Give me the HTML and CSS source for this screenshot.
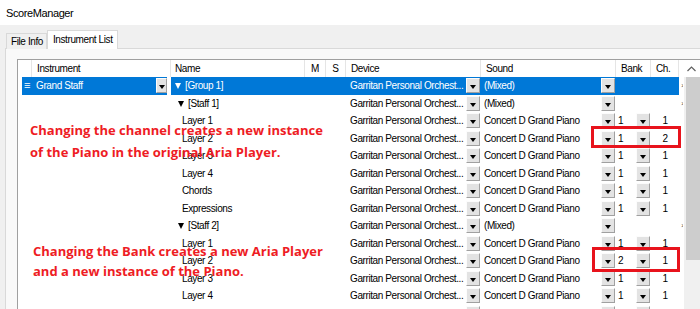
FILE: index.html
```html
<!DOCTYPE html>
<html lang="en">
<head>
    <meta charset="UTF-8">
    <title>ScoreManager</title>
    <link rel="stylesheet" href="styles.css">
</head>
<body>
    <div class="titlebar">ScoreManager</div>

    <div class="tabs">
        <div class="tab">File Info</div>
        <div class="tab active">Instrument List</div>
    </div>

    <div class="panel">
        <div class="grid">
            <div class="table">
                <div class="row head">
                    <div class="c"></div>
                    <div class="c">Instrument</div>
                    <div class="c">Name</div>
                    <div class="c mid">M</div>
                    <div class="c mid">S</div>
                    <div class="c">Device</div>
                    <div class="c">Sound</div>
                    <div class="c">Bank</div>
                    <div class="c">Ch.</div>
                    <div class="c"></div>
                </div>

                <div class="row sel">
                    <div class="c rh">&#8801;</div>
                    <div class="c inst"><span>Grand Staff</span><span class="dd small"></span></div>
                    <div class="c name l0"><i class="tri"></i>[Group 1]</div>
                    <div class="c"></div>
                    <div class="c"></div>
                    <div class="c dev"><span>Garritan Personal Orchest...</span><span class="dd"></span></div>
                    <div class="c snd"><span>(Mixed)</span><span class="dd"></span></div>
                    <div class="c"></div>
                    <div class="c"></div>
                    <div class="c x">&times;</div>
                </div>

                <div class="row">
                    <div class="c"></div><div class="c"></div>
                    <div class="c name l1"><i class="tri"></i>[Staff 1]</div>
                    <div class="c"></div><div class="c"></div>
                    <div class="c dev"><span>Garritan Personal Orchest...</span><span class="dd"></span></div>
                    <div class="c snd"><span>(Mixed)</span><span class="dd"></span></div>
                    <div class="c"></div><div class="c"></div>
                    <div class="c x">&times;</div>
                </div>

                <div class="row">
                    <div class="c"></div><div class="c"></div>
                    <div class="c name l2">Layer 1</div>
                    <div class="c"></div><div class="c"></div>
                    <div class="c dev"><span>Garritan Personal Orchest...</span><span class="dd"></span></div>
                    <div class="c snd"><span>Concert D Grand Piano</span><span class="dd"></span></div>
                    <div class="c bank"><span>1</span><span class="dd"></span></div>
                    <div class="c ch">1</div>
                    <div class="c"></div>
                </div>

                <div class="row">
                    <div class="c"></div><div class="c"></div>
                    <div class="c name l2">Layer 2</div>
                    <div class="c"></div><div class="c"></div>
                    <div class="c dev"><span>Garritan Personal Orchest...</span><span class="dd"></span></div>
                    <div class="c snd"><span>Concert D Grand Piano</span><span class="dd"></span></div>
                    <div class="c bank"><span>1</span><span class="dd"></span></div>
                    <div class="c ch">2</div>
                    <div class="c"></div>
                </div>

                <div class="row">
                    <div class="c"></div><div class="c"></div>
                    <div class="c name l2">Layer 3</div>
                    <div class="c"></div><div class="c"></div>
                    <div class="c dev"><span>Garritan Personal Orchest...</span><span class="dd"></span></div>
                    <div class="c snd"><span>Concert D Grand Piano</span><span class="dd"></span></div>
                    <div class="c bank"><span>1</span><span class="dd"></span></div>
                    <div class="c ch">1</div>
                    <div class="c"></div>
                </div>

                <div class="row">
                    <div class="c"></div><div class="c"></div>
                    <div class="c name l2">Layer 4</div>
                    <div class="c"></div><div class="c"></div>
                    <div class="c dev"><span>Garritan Personal Orchest...</span><span class="dd"></span></div>
                    <div class="c snd"><span>Concert D Grand Piano</span><span class="dd"></span></div>
                    <div class="c bank"><span>1</span><span class="dd"></span></div>
                    <div class="c ch">1</div>
                    <div class="c"></div>
                </div>

                <div class="row">
                    <div class="c"></div><div class="c"></div>
                    <div class="c name l2">Chords</div>
                    <div class="c"></div><div class="c"></div>
                    <div class="c dev"><span>Garritan Personal Orchest...</span><span class="dd"></span></div>
                    <div class="c snd"><span>Concert D Grand Piano</span><span class="dd"></span></div>
                    <div class="c bank"><span>1</span><span class="dd"></span></div>
                    <div class="c ch">1</div>
                    <div class="c"></div>
                </div>

                <div class="row">
                    <div class="c"></div><div class="c"></div>
                    <div class="c name l2">Expressions</div>
                    <div class="c"></div><div class="c"></div>
                    <div class="c dev"><span>Garritan Personal Orchest...</span><span class="dd"></span></div>
                    <div class="c snd"><span>Concert D Grand Piano</span><span class="dd"></span></div>
                    <div class="c bank"><span>1</span><span class="dd"></span></div>
                    <div class="c ch">1</div>
                    <div class="c"></div>
                </div>

                <div class="row">
                    <div class="c"></div><div class="c"></div>
                    <div class="c name l1"><i class="tri"></i>[Staff 2]</div>
                    <div class="c"></div><div class="c"></div>
                    <div class="c dev"><span>Garritan Personal Orchest...</span><span class="dd"></span></div>
                    <div class="c snd"><span>(Mixed)</span><span class="dd"></span></div>
                    <div class="c"></div><div class="c"></div>
                    <div class="c x">&times;</div>
                </div>

                <div class="row">
                    <div class="c"></div><div class="c"></div>
                    <div class="c name l2">Layer 1</div>
                    <div class="c"></div><div class="c"></div>
                    <div class="c dev"><span>Garritan Personal Orchest...</span><span class="dd"></span></div>
                    <div class="c snd"><span>Concert D Grand Piano</span><span class="dd"></span></div>
                    <div class="c bank"><span>1</span><span class="dd"></span></div>
                    <div class="c ch">1</div>
                    <div class="c"></div>
                </div>

                <div class="row">
                    <div class="c"></div><div class="c"></div>
                    <div class="c name l2">Layer 2</div>
                    <div class="c"></div><div class="c"></div>
                    <div class="c dev"><span>Garritan Personal Orchest...</span><span class="dd"></span></div>
                    <div class="c snd"><span>Concert D Grand Piano</span><span class="dd"></span></div>
                    <div class="c bank"><span>2</span><span class="dd"></span></div>
                    <div class="c ch">1</div>
                    <div class="c"></div>
                </div>

                <div class="row">
                    <div class="c"></div><div class="c"></div>
                    <div class="c name l2">Layer 3</div>
                    <div class="c"></div><div class="c"></div>
                    <div class="c dev"><span>Garritan Personal Orchest...</span><span class="dd"></span></div>
                    <div class="c snd"><span>Concert D Grand Piano</span><span class="dd"></span></div>
                    <div class="c bank"><span>1</span><span class="dd"></span></div>
                    <div class="c ch">1</div>
                    <div class="c"></div>
                </div>

                <div class="row">
                    <div class="c"></div><div class="c"></div>
                    <div class="c name l2">Layer 4</div>
                    <div class="c"></div><div class="c"></div>
                    <div class="c dev"><span>Garritan Personal Orchest...</span><span class="dd"></span></div>
                    <div class="c snd"><span>Concert D Grand Piano</span><span class="dd"></span></div>
                    <div class="c bank"><span>1</span><span class="dd"></span></div>
                    <div class="c ch">1</div>
                    <div class="c"></div>
                </div>

                <div class="row">
                    <div class="c"></div><div class="c"></div>
                    <div class="c name l2">Chords</div>
                    <div class="c"></div><div class="c"></div>
                    <div class="c dev"><span>Garritan Personal Orchest...</span><span class="dd"></span></div>
                    <div class="c snd"><span>Concert D Grand Piano</span><span class="dd"></span></div>
                    <div class="c bank"><span>1</span><span class="dd"></span></div>
                    <div class="c ch">1</div>
                    <div class="c"></div>
                </div>
            </div>

            <div class="scroll">
                <div class="scroll-up">
                    <svg width="9" height="6" viewBox="0 0 9 6"><polyline points="0.5,5 4.5,1 8.5,5" fill="none" stroke="#606060" stroke-width="1.2"/></svg>
                </div>
                <div class="thumb"></div>
            </div>
        </div>
    </div>

    <!-- annotations drawn over the grid -->
    <div class="note note-channel">Changing the channel creates a new instance<br>of the Piano in the original Aria Player.</div>
    <div class="note note-bank">Changing the Bank creates a new Aria Player<br>and a new instance of the Piano.</div>
    <div class="mark mark-channel"></div>
    <div class="mark mark-bank"></div>
</body>
</html>
```

FILE: styles.css
```css
body {
    margin: 0;
    width: 700px;
    height: 309px;
    overflow: hidden;
    position: relative;
    background-color: #f0f0f0;
    font-family: "Liberation Sans", Arial, sans-serif;
    font-size: 10px;
    letter-spacing: -0.4px;
    color: #000;
}
.titlebar {
    height: 25px;
    padding: 1px 0 0 6px;
    box-sizing: border-box;
    line-height: 24px;
    font-size: 11px;
    background-color: #fff;
}
.tabs {
    display: flex;
    align-items: flex-end;
    height: 24px;
    padding-left: 6px;
}
.tab {
    height: 15px;
    padding: 0 3px 0 4px;
    line-height: 16px;
    border: 1px solid #d9d9d9;
    border-bottom: none;
    background-color: #f0f0f0;
}
.tab.active {
    position: relative;
    z-index: 1;
    height: 18px;
    padding: 0 4px 0 5px;
    line-height: 18px;
    background-color: #fff;
}
.panel {
    margin: -1px 0 0 5px;
    padding: 10px 0 0 11px;
    height: 300px;
    border-top: 1px solid #d9d9d9;
    border-left: 1px solid #d9d9d9;
    background-color: #f9f9f9;
}
.grid {
    display: flex;
    width: 690px;
    height: 260px;
    border-top: 1px solid #a0a0a0;
    border-left: 1px solid #a0a0a0;
    background-color: #fff;
}
.table {
    width: 665px;
    flex-shrink: 0;
}
.row {
    display: grid;
    grid-template-columns: 14px 139px 134px 21px 20px 135px 135px 35px 28px 4px;
    height: 17.5px;
    line-height: 17.5px;
    white-space: nowrap;
}
.row.head {
    height: 17px;
    line-height: 17px;
}
.c {
    box-sizing: border-box;
    overflow: hidden;
}
.head .c {
    padding-left: 5px;
    border-right: 1px solid #e5e5e5;
}
.head .c:nth-child(3) {
    padding-left: 4px;
}
.head .c.mid {
    padding-left: 0;
    text-align: center;
}
.sel {
    background-color: #0078d7;
    color: #fff;
}
.sel .rh {
    box-shadow: inset 4px 0 #fff;
    padding-left: 6px;
    font-size: 11px;
    letter-spacing: 0;
}
.sel .inst {
    box-shadow: inset -4px 0 #fff;
}
.sel .x {
    background-color: #fff;
}
.inst, .dev, .snd, .bank {
    display: flex;
    align-items: center;
    justify-content: space-between;
}
.inst {
    padding: 0 4px;
}
.dev {
    padding: 0 1px 0 4px;
}
.snd {
    padding: 0 1px 0 3px;
}
.bank {
    padding: 0 1px 0 2px;
}
.ch {
    text-align: center;
}
.x {
    padding-left: 2px;
    color: #555;
    font-size: 8px;
}
.name.l0 { padding-left: 4px; }
.name.l1 { padding-left: 7px; }
.name.l2 { padding-left: 11px; }
.tri {
    display: inline-block;
    width: 0;
    height: 0;
    margin: 0 4px 0 0;
    border-left: 3.5px solid transparent;
    border-right: 3.5px solid transparent;
    border-top: 6px solid currentColor;
}
.dd {
    position: relative;
    flex-shrink: 0;
    width: 14px;
    height: 15px;
    box-sizing: border-box;
    background-color: #e3e3e3;
    border: 1px solid;
    border-color: #fcfcfc #a0a0a0 #a0a0a0 #fcfcfc;
}
.dd.small {
    width: 11px;
}
.dd::after {
    content: "";
    position: absolute;
    left: 50%;
    top: 6px;
    margin-left: -3px;
    border-left: 3px solid transparent;
    border-right: 3px solid transparent;
    border-top: 4px solid #000;
}
.scroll {
    width: 17px;
    flex-shrink: 0;
    margin-left: 1px;
    background-color: #f0f0f0;
}
.scroll-up {
    display: flex;
    align-items: center;
    justify-content: center;
    height: 17px;
    padding-right: 3px;
    background-color: #fff;
}
.thumb {
    height: 183px;
    margin-left: 2px;
    background-color: #cdcdcd;
}
.note {
    position: absolute;
    font-family: "Open Sans", "Liberation Sans", sans-serif;
    font-weight: 700;
    font-size: 13px;
    letter-spacing: 0;
    color: #ee1c24;
    white-space: nowrap;
}
.note-channel {
    left: 30px;
    top: 119px;
    line-height: 22px;
}
.note-bank {
    left: 33px;
    top: 241px;
    line-height: 20px;
}
.mark {
    position: absolute;
    box-sizing: border-box;
    border: 3px solid #e8131c;
}
.mark-channel {
    left: 591px;
    top: 126px;
    width: 90px;
    height: 22px;
}
.mark-bank {
    left: 592px;
    top: 247px;
    width: 88px;
    height: 25px;
}
```
